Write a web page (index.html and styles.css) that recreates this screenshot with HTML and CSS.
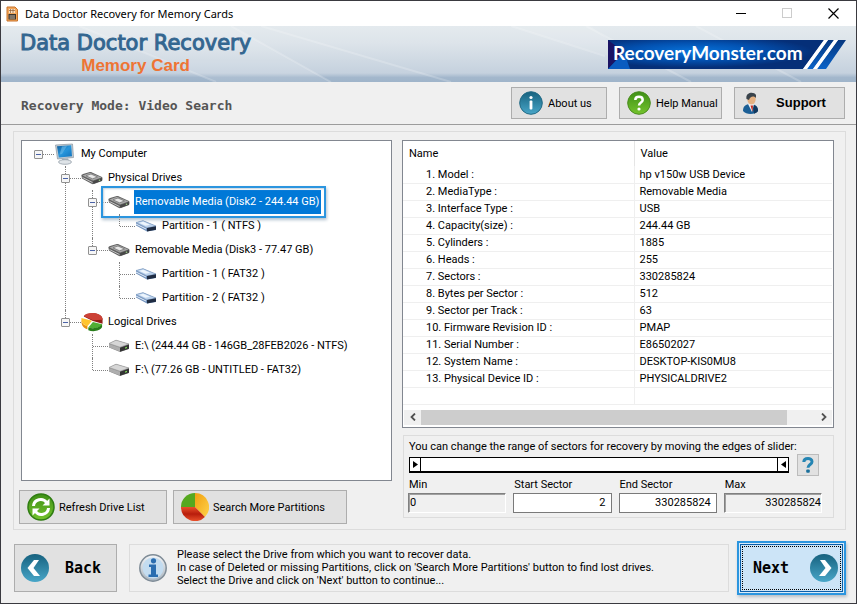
FILE: index.html
```html
<!DOCTYPE html>
<html lang="en">
<head>
<meta charset="utf-8">
<title>Data Doctor Recovery for Memory Cards</title>
<link rel="stylesheet" href="styles.css">
</head>
<body>
<svg class="defs" width="0" height="0" aria-hidden="true">
  <defs>
    <linearGradient id="teal" x1="0" y1="0" x2="0" y2="1"><stop offset="0" stop-color="#17627f"/><stop offset="1" stop-color="#48a6c8"/></linearGradient>
    <linearGradient id="green" x1="0" y1="0" x2="0" y2="1"><stop offset="0" stop-color="#3f9017"/><stop offset="1" stop-color="#74c32c"/></linearGradient>
    <linearGradient id="steel" x1="0" y1="0" x2="0" y2="1"><stop offset="0" stop-color="#f4f6f8"/><stop offset="1" stop-color="#a9b4be"/></linearGradient>
    <linearGradient id="screen" x1="0" y1="0" x2="1" y2="1"><stop offset="0" stop-color="#0f5c9c"/><stop offset="0.5" stop-color="#2796dc"/><stop offset="1" stop-color="#1372bb"/></linearGradient>
    <symbol id="disk" viewBox="0 0 22 14">
      <path d="M.5 5 C0 4 1 3.500 2 3 L8 1.300 C9 1 10 1 11 1.500 L21 6 C21.800 6.500 21.500 9.500 21 10 L13 13 C12 13.300 11 13.200 10 12.500 L1 7.500Z" fill="#636363"/>
      <path d="M1.500 4.500 L9 1.800 L20.500 6.500 L12 9.500Z" fill="#a9a9a9"/>
      <path d="M5 4.800 L10 3 L16.500 6 L11.500 7.800Z" fill="#e9e9e9" stroke="#6c6c6c" stroke-width=".7"/>
      <path d="M12 10.300 L21 7 V9.700 L12.500 12.700Z" fill="#474747"/>
      <path d="M1.500 6.500 L11.500 11.500" stroke="#c9c9c9" stroke-width=".9"/>
      <circle cx="18.500" cy="9.300" r=".8" fill="#9dcf8a"/>
    </symbol>
    <symbol id="part" viewBox="0 0 22 14">
      <path d="M1 3.500 L8 1.500 L21 7 V11 L12 12.500 L1 6.500Z" fill="#7192bd"/>
      <path d="M1 3.500 L8 1.700 L21 7 L12 9Z" fill="#bcd2ec" stroke="#7c99bd" stroke-width=".6"/>
      <path d="M4 3.800 L8.500 2.800 L15 5.800 L10.500 6.800Z" fill="#edf5fd"/>
      <path d="M12 9 L21 7.200 V10.800 L12 12.500Z" fill="#1f2c42"/>
      <path d="M1 5 L11 10" stroke="#e6f0fb" stroke-width="1"/>
    </symbol>
    <symbol id="volume" viewBox="0 0 22 14">
      <path d="M1 4.500 L8 1 L21 5 V10 L12 13 L1 8.500Z" fill="#8a8a8a"/>
      <path d="M1 4.500 L8 1.200 L21 5 L12 8.200Z" fill="#d6d6d6" stroke="#999" stroke-width=".6"/>
      <path d="M1 5 L12 8.700 V12.600 L1 8.200Z" fill="#aeaeae"/>
      <path d="M12 8.700 L21 5.500 V9.800 L12 12.800Z" fill="#333"/>
      <path d="M17 8.500 l2 -.7 v1.200 l-2 .7z" fill="#7ed957"/>
    </symbol>
    <symbol id="computer" viewBox="0 0 22 22">
      <path d="M1.500 2 L18.500 1 L19.500 14.500 L3.500 16Z" fill="#c3ccd3" stroke="#8995a0" stroke-width=".7"/>
      <path d="M3 3.200 L17.200 2.300 L18 13.200 L4.800 14.500Z" fill="url(#screen)"/>
      <path d="M8 3.500 L13 3 L8 11 L5.500 11.500Z" fill="#7cc6f0" opacity=".5"/>
      <path d="M8 15.800 L14 15.200 L15 18 H8Z" fill="#aeb8c0"/>
      <ellipse cx="11" cy="19" rx="6.500" ry="2.300" fill="#dfe4e8" stroke="#8d98a2" stroke-width=".7"/>
    </symbol>
    <symbol id="pie3d" viewBox="0 0 24 22">
      <path d="M3 5 C6 0 22 0 23.500 7.500 V13 L13 10Z" fill="#8f1d16"/>
      <path d="M3 4.500 C6 -.5 22 -.5 23.500 7.500 V8.500 L13 9Z" fill="#cc4136"/>
      <path d="M.5 6.500 L12 9.500 L7 15.500 C2 14 0 10 .5 6.500Z" fill="#ffc52e"/>
      <path d="M.5 8 C1 12.500 3 14.500 7 15.500 V19 C2.500 17.500 .5 14 .5 11Z" fill="#e8930f"/>
      <path d="M13 11 L23 13.500 C23 17 14 19 8 17Z" fill="#4fae34"/>
      <path d="M8 17 C14 19 21 17 23 13.500 V16.500 C21 21 13 22 8 20Z" fill="#287d1a"/>
    </symbol>
  </defs>
</svg>

<header class="titlebar">
  <svg class="app-icon" viewBox="0 0 12 16" aria-hidden="true">
    <path d="M1 1 H9 L11.500 3.500 V15 H1Z" fill="#f2a65a" stroke="#c7722a" stroke-width="1"/>
    <rect x="3" y="3" width="6" height="4" fill="#f8dfc4"/><path d="M3 4.500 H9 M4.500 3 V7 M7 3 V7" stroke="#8c5a32" stroke-width=".7"/>
    <rect x="2.500" y="8" width="7.500" height="5.500" fill="#3b332c"/><path d="M3.500 10 H9 M3.500 12 H9" stroke="#e9dccb" stroke-width=".8"/>
  </svg>
  <span class="window-title">Data Doctor Recovery for Memory Cards</span>
  <button class="win-btn" aria-label="Minimize"><svg viewBox="0 0 11 11"><path d="M0 5.500 H10" stroke="#000"/></svg></button>
  <button class="win-btn" aria-label="Maximize" disabled><svg viewBox="0 0 11 11"><rect x=".5" y=".5" width="9" height="9" fill="none" stroke="#ccc"/></svg></button>
  <button class="win-btn" aria-label="Close"><svg viewBox="0 0 11 11"><path d="M.5 .5 L10.500 10.500 M10.500 .5 L.5 10.500" stroke="#000" stroke-width="1.200"/></svg></button>
</header>

<section class="banner">
  <svg class="rays" viewBox="0 0 855 56" preserveAspectRatio="none" aria-hidden="true">
    <path d="M78 0 L215 56 M230 0 L330 56 M260 0 L450 56 M510 0 L604 30 M585 0 L690 56 M695 0 L800 56" stroke="#fff" stroke-opacity=".2" stroke-width="2" fill="none"/>
    <path d="M78 0 L215 56 H330 L230 0Z M510 0 L640 40 L590 0Z" fill="#fff" fill-opacity=".1"/>
  </svg>
  <div class="brand">
    <h1>Data Doctor Recovery</h1>
    <p>Memory Card</p>
  </div>
  <a class="site" href="#">
    <svg class="site-bg" viewBox="0 0 238 29" preserveAspectRatio="none" aria-hidden="true">
      <defs><radialGradient id="siteblue" cx=".4" cy=".4" r=".55"><stop offset="0" stop-color="#0874dc"/><stop offset=".55" stop-color="#0351b0"/><stop offset="1" stop-color="#052f78"/></radialGradient>
      <linearGradient id="stripe" x1="0" y1="0" x2="0" y2="1"><stop offset="0" stop-color="#06377f"/><stop offset="1" stop-color="#0a63c9"/></linearGradient></defs>
      <path d="M0 0 H216 L195 29 H0Z" fill="url(#siteblue)"/>
      <path d="M0 0 L16 12 L0 29Z" fill="#1b1464"/><path d="M0 29 L16 12 L22 29Z" fill="#0a5cc0"/>
      <path d="M220 0 H226 L205 29 H199Z M230 0 H238 L218 29 H209Z" fill="url(#stripe)"/>
      <path d="M216 0 H220 L199 29 H195Z M226 0 H230 L209 29 H205Z" fill="#fff"/>
    </svg>
    <span>RecoveryMonster.com</span>
  </a>
</section>

<nav class="toolbar">
  <h2>Recovery Mode: Video Search</h2>
  <button class="btn about">
    <svg class="ico24" viewBox="0 0 24 24" aria-hidden="true"><circle cx="12" cy="12" r="11.300" fill="url(#teal)" stroke="#236a85"/><circle cx="12" cy="6.500" r="1.600" fill="#fff"/><rect x="10.600" y="9.500" width="2.800" height="9" rx="1" fill="#fff"/></svg>
    <span>About us</span>
  </button>
  <button class="btn help">
    <svg class="ico24" viewBox="0 0 24 24" aria-hidden="true"><circle cx="12" cy="12" r="11.300" fill="url(#green)" stroke="#4b8c20"/><path d="M8.300 9 C8.300 4.800 15.700 4.800 15.700 9 C15.700 11.500 12 11.500 12 14.500" fill="none" stroke="#fff" stroke-width="2.500"/><circle cx="12" cy="18" r="1.600" fill="#fff"/></svg>
    <span>Help Manual</span>
  </button>
  <button class="btn support">
    <svg viewBox="0 0 18 23" width="18" height="23" aria-hidden="true"><path d="M1 19 C1 14 4 12 8 12 C13 12 16 14 16 19 C13 23 4 23 1 19Z" fill="#1b5f96"/><path d="M11 13 C14 13.500 16 15 16 19 C15 20.500 13.500 21.300 12 21.700Z" fill="#12395f"/><path d="M6 12 L10 20 L12 12Z" fill="#f1f4f7"/><path d="M8.500 13.500 L10.500 20 L11 13.500Z" fill="#c42b20"/><ellipse cx="9.500" cy="7" rx="4.200" ry="5.500" fill="#e6b283"/><path d="M4.500 7 C3 0 12 -1 14 3 L14 6 C11 3 8 5 7 8Z" fill="#39434b"/></svg>
    <span>Support</span>
  </button>
</nav>

<main class="panel">
  <section class="drives">
    <ul class="tree" role="tree">
      <li><div class="row"><button class="toggle" aria-label="Collapse"></button><i class="dots"></i><svg class="node-icon big"><use href="#computer"/></svg><span class="label">My Computer</span></div>
        <ul>
          <li><div class="row"><button class="toggle" aria-label="Collapse"></button><i class="dots"></i><svg class="node-icon"><use href="#disk"/></svg><span class="label">Physical Drives</span></div>
            <ul>
              <li><div class="row"><button class="toggle" aria-label="Collapse"></button><i class="dots"></i><svg class="node-icon"><use href="#disk"/></svg><span class="label selected">Removable Media (Disk2 - 244.44 GB)</span></div>
                <ul>
                  <li><div class="row leaf"><i class="dots"></i><svg class="node-icon"><use href="#part"/></svg><span class="label">Partition - 1 ( NTFS )</span></div></li>
                </ul>
              </li>
              <li><div class="row"><button class="toggle" aria-label="Collapse"></button><i class="dots"></i><svg class="node-icon"><use href="#disk"/></svg><span class="label">Removable Media (Disk3 - 77.47 GB)</span></div>
                <ul>
                  <li><div class="row leaf"><i class="dots"></i><svg class="node-icon"><use href="#part"/></svg><span class="label">Partition - 1 ( FAT32 )</span></div></li>
                  <li><div class="row leaf"><i class="dots"></i><svg class="node-icon"><use href="#part"/></svg><span class="label">Partition - 2 ( FAT32 )</span></div></li>
                </ul>
              </li>
            </ul>
          </li>
          <li><div class="row"><button class="toggle" aria-label="Collapse"></button><i class="dots"></i><svg class="node-icon big"><use href="#pie3d"/></svg><span class="label">Logical Drives</span></div>
            <ul>
              <li><div class="row leaf"><i class="dots"></i><svg class="node-icon"><use href="#volume"/></svg><span class="label">E:\ (244.44 GB - 146GB_28FEB2026 - NTFS)</span></div></li>
              <li><div class="row leaf"><i class="dots"></i><svg class="node-icon"><use href="#volume"/></svg><span class="label">F:\ (77.26 GB - UNTITLED - FAT32)</span></div></li>
            </ul>
          </li>
        </ul>
      </li>
    </ul>
    <div class="actions">
      <button class="btn refresh">
        <svg class="ico28" viewBox="0 0 28 28" aria-hidden="true"><circle cx="14" cy="14" r="13" fill="url(#green)" stroke="#2f7d12" stroke-width="1.500"/><path d="M6.500 13 C7 6 16 4.500 19.500 9.500 M21.500 15 C21 22 12 23.500 8.500 18.500" fill="none" stroke="#fff" stroke-width="3"/><path d="M22.500 5.500 V12.500 H15.500Z M5.500 22.500 V15.500 H12.500Z" fill="#fff"/></svg>
        <span>Refresh Drive List</span>
      </button>
      <button class="btn search">
        <svg class="ico28" viewBox="0 0 28 28" aria-hidden="true">
          <defs><linearGradient id="pr" x1="0" y1="0" x2="0" y2="1"><stop offset="0" stop-color="#e8502a"/><stop offset=".5" stop-color="#b81d0c"/><stop offset="1" stop-color="#e8502a"/></linearGradient><linearGradient id="py" x1="0" y1="0" x2="1" y2="1"><stop offset="0" stop-color="#f0a010"/><stop offset="1" stop-color="#ffd24a"/></linearGradient></defs>
          <path d="M14 14 V0 A14 14 0 0 1 23.900 23.900Z" fill="url(#py)"/><path d="M14 14 L23.900 23.900 A14 14 0 0 1 0 14Z" fill="url(#pr)"/><path d="M14 14 H0 A14 14 0 0 1 14 0Z" fill="#55a81f"/></svg>
        <span>Search More Partitions</span>
      </button>
    </div>
  </section>

  <section class="details">
    <div class="listview">
      <table>
        <thead><tr><th class="name">Name</th><th>Value</th></tr></thead>
        <tbody>
          <tr><td>1. Model :</td><td>hp v150w USB Device</td></tr>
          <tr><td>2. MediaType :</td><td>Removable Media</td></tr>
          <tr><td>3. Interface Type :</td><td>USB</td></tr>
          <tr><td>4. Capacity(size) :</td><td>244.44 GB</td></tr>
          <tr><td>5. Cylinders :</td><td>1885</td></tr>
          <tr><td>6. Heads :</td><td>255</td></tr>
          <tr><td>7. Sectors :</td><td>330285824</td></tr>
          <tr><td>8. Bytes per Sector :</td><td>512</td></tr>
          <tr><td>9. Sector per Track :</td><td>63</td></tr>
          <tr><td>10. Firmware Revision ID :</td><td>PMAP</td></tr>
          <tr><td>11. Serial Number :</td><td>E86502027</td></tr>
          <tr><td>12. System Name :</td><td>DESKTOP-KIS0MU8</td></tr>
          <tr><td>13. Physical Device ID :</td><td>PHYSICALDRIVE2</td></tr>
          <tr><td></td><td></td></tr>
        </tbody>
      </table>
      <div class="scrollbar">
        <button aria-label="Scroll left"><svg viewBox="0 0 6 8"><path d="M5 .5 L1.500 4 L5 7.500" fill="none" stroke="#505050" stroke-width="1.800"/></svg></button>
        <div class="track"><div class="thumb"></div></div>
        <button aria-label="Scroll right"><svg viewBox="0 0 6 8"><path d="M1 .5 L4.500 4 L1 7.500" fill="none" stroke="#505050" stroke-width="1.800"/></svg></button>
      </div>
    </div>

    <div class="range">
      <p>You can change the range of sectors for recovery by moving the edges of slider:</p>
      <div class="slider-row">
        <div class="slider">
          <input class="from" type="range" min="0" max="330285824" value="0" aria-label="Start sector">
          <input class="to" type="range" min="0" max="330285824" value="330285824" aria-label="End sector">
        </div>
        <button class="hint" aria-label="Help"><svg viewBox="0 0 12 16" aria-hidden="true"><path d="M1.800 5 C2 .5 10 .5 10 4.700 C10 7.500 6 7.500 6 10.800" fill="none" stroke="#2585b3" stroke-width="3"/><rect x="4.200" y="12.500" width="3.600" height="3.300" rx="1" fill="#1b6f9b"/></svg></button>
      </div>
      <div class="fields">
        <label for="min">Min</label><label for="start">Start Sector</label><label for="end">End Sector</label><label for="max">Max</label>
        <input id="min" class="sunken first" value="0" readonly>
        <input id="start" value="2">
        <input id="end" value="330285824">
        <input id="max" class="sunken" value="330285824" readonly>
      </div>
    </div>
  </section>
</main>

<footer class="footer">
  <button class="btn back">
    <svg class="ico28" viewBox="0 0 28 28" aria-hidden="true"><circle cx="14" cy="14" r="14" fill="url(#teal)"/><path d="M18 6 H13 L6.500 14 L13 22 H19 L12.500 14Z" fill="#fff"/></svg>
    <span>Back</span>
  </button>
  <div class="info">
    <svg class="ico28" viewBox="0 0 28 28" aria-hidden="true"><circle cx="14" cy="14" r="13.200" fill="url(#steel)" stroke="#7f8c97" stroke-width="1.500"/><circle cx="14" cy="14" r="10.500" fill="#c3dcf0"/><circle cx="14.500" cy="6.800" r="2.600" fill="#2a6db0"/><path d="M10 10.500 H17 V20.500 H19 V23 H9.500 V20.500 H12 V13 H10Z" fill="#2a6db0"/></svg>
    <p>Please select the Drive from which you want to recover data.<br>In case of Deleted or missing Partitions, click on 'Search More Partitions' button to find lost drives.<br>Select the Drive and click on 'Next' button to continue...</p>
  </div>
  <button class="next">
    <span class="next-face">
      <span>Next</span>
      <svg class="ico28" viewBox="0 0 28 28" aria-hidden="true"><circle cx="14" cy="14" r="14" fill="url(#teal)"/><path d="M10 6 H15 L21.500 14 L15 22 H9 L15.500 14Z" fill="#fff"/></svg>
    </span>
  </button>
</footer>
</body>
</html>
```
FILE: styles.css
```css
* { box-sizing: border-box; }

body {
  margin: 0;
  min-height: 100vh;
  display: flex;
  flex-direction: column;
  border: 1px solid #3a3a40;
  background: #f0f0f0;
  color: #000;
  font: 11px/13px Roboto, "DejaVu Sans Condensed", sans-serif;
}

h1, h2, p, ul { margin: 0; padding: 0; }
ul { list-style: none; }
button, input { font: inherit; color: inherit; margin: 0; }
button { padding: 0; }
svg { display: block; flex: none; }
.defs { position: absolute; }

/* Window caption */
.titlebar {
  display: flex;
  align-items: center;
  height: 25px;
  padding: 0 0 0 5px;
  background: #fff;
}
.app-icon { width: 12px; height: 16px; }
.window-title {
  flex: 1;
  margin-left: 7px;
  font: 11px/16px "Noto Sans", "Open Sans", sans-serif;
}
.win-btn {
  display: flex;
  align-items: center;
  justify-content: center;
  width: 46px;
  height: 25px;
  border: 0;
  background: none;
}
.win-btn svg { width: 11px; height: 11px; }

/* Banner */
.banner {
  position: relative;
  display: flex;
  justify-content: space-between;
  height: 56px;
  padding: 3px 10px 0 19px;
  background: linear-gradient(#e4eaee, #dde4ea 30%, #cbd6e1 70%, #c5d1de 84%, #a3b7cc 92%, #9fb4ca);
}
.rays { position: absolute; inset: 0; width: 100%; height: 100%; }
.brand { position: relative; }
.brand h1 {
  color: #336690;
  font: 21px/28px "DejaVu Sans", sans-serif;
  -webkit-text-stroke: 1px #336690;
}
.brand p {
  color: #ee7434;
  text-align: center;
  font: bold 17px/18px "Liberation Sans", sans-serif;
}
.site {
  position: relative;
  width: 238px;
  height: 29px;
  margin-top: 11px;
  padding-left: 5px;
  color: #fff;
  text-decoration: none;
  font: bold 19px/26px Lato, sans-serif;
}
.site-bg { position: absolute; inset: 0; width: 100%; height: 100%; }
.site span { position: relative; }

/* Toolbar */
.toolbar {
  display: flex;
  align-items: center;
  gap: 12px;
  height: 43px;
  padding: 0 11px 0 20px;
  border-bottom: 1px solid #9c9c9c;
}
.toolbar h2 {
  flex: 1;
  padding-top: 6px;
  color: #555;
  font: bold 13px/16px "DejaVu Sans Mono", monospace;
}
.btn {
  display: flex;
  align-items: center;
  gap: 6px;
  height: 34px;
  padding: 0 7px;
  border: 1px solid #adadad;
  background: #e1e1e1;
  white-space: nowrap;
}
.toolbar .btn { height: 32px; gap: 5px; }
.about { width: 96px; }
.help { width: 103px; }
.support { width: 111px; }
.support span { flex: 1; font: bold 13px/16px "Liberation Sans", sans-serif; }
.ico24 { width: 24px; height: 24px; }
.ico28 { width: 28px; height: 28px; }

/* Main panel */
.panel {
  flex: 1;
  display: grid;
  grid-template-columns: 371fr 432fr;
  gap: 10px;
  margin: 6px 10px 0 12px;
  padding: 8px 11px 5px 7px;
  border: 1px solid #dcdcdc;
}
.drives, .details { display: flex; flex-direction: column; min-width: 0; }
.tree {
  flex: 1;
  padding: 1px 0 0 12px;
  border: 1px solid #828790;
  background: #fff;
}
.tree ul { padding-left: 27px; }
.tree li { position: relative; }
.tree li li::before {
  content: "";
  position: absolute;
  left: 4px;
  top: 0;
  bottom: 0;
  border-left: 1px dotted #808080;
}
.tree li li:last-child::before { bottom: auto; height: 12px; }
.row {
  position: relative;
  display: flex;
  align-items: center;
  height: 24px;
  white-space: nowrap;
}
.toggle {
  width: 9px;
  height: 9px;
  border: 1px solid #919191;
  border-radius: 1px;
  background: linear-gradient(#4b63a7, #4b63a7) center / 5px 1px no-repeat, #f6f6f6;
}
.dots { width: 11px; border-top: 1px dotted #808080; }
.leaf .dots { width: 15px; margin-left: 5px; }
.node-icon { width: 22px; height: 14px; }
.node-icon.big { height: 22px; }
.label { margin-left: 4px; padding: 0 1px; line-height: 24px; }
.selected {
  position: relative;
  padding-right: 2px;
  background: #0078d7;
  color: #fff;
}
.selected::after {
  content: "";
  position: absolute;
  inset: -4px -5px -4px -33px;
  border: 2px solid #2b95df;
  box-shadow: 1px 2px 3px #b4c3cf, inset 1px 1px 2px #c6d2dc;
}

.actions { display: flex; gap: 6px; margin: 9px 0 0 -2px; }
.refresh { width: 148px; }
.search { width: 174px; }
.actions .btn { gap: 4px; }

/* Property list */
.listview { border: 1px solid #828790; background: #fff; padding: 0 1px 2px 0; }
.listview table { width: 100%; table-layout: fixed; border-collapse: collapse; }
.listview th {
  height: 25px;
  padding: 0 5px 0 6px;
  font-weight: normal;
  text-align: left;
}
.listview .name { width: 231px; border-right: 1px solid #e5e5e5; }
.listview td { height: 17px; padding: 0 5px; border-bottom: 1px solid #efefef; }
.listview td:first-child { padding-left: 23px; border-right: 1px solid #efefef; }
.scrollbar { display: flex; height: 15px; margin: 5px 0 0 1px; background: #f0f0f0; }
.scrollbar button {
  display: flex;
  align-items: center;
  justify-content: center;
  width: 17px;
  border: 0;
  background: none;
}
.scrollbar svg { width: 6px; height: 8px; }
.track { flex: 1; }
.thumb { width: 93%; height: 100%; background: #cdcdcd; }

/* Sector range */
.range {
  margin: 7px 0 0 1px;
  padding: 4px 11px 4px 4px;
  border: 1px solid #dcdcdc;
}
.range p, .fields label { padding-left: 1px; }
.slider-row { display: flex; align-items: center; gap: 8px; margin-top: 1px; padding-left: 1px; }
.slider {
  flex: 1;
  display: grid;
  height: 16px;
  border: 1px solid #000;
  border-bottom-width: 2px;
  background: #fff;
}
.slider input {
  grid-area: 1 / 1;
  appearance: none;
  width: 100%;
  height: 13px;
  background: none;
  pointer-events: none;
}
.slider input::-webkit-slider-thumb {
  appearance: none;
  width: 11px;
  height: 13px;
  border-right: 1px solid #000;
  pointer-events: auto;
  background: center / 5px 7px no-repeat url("data:image/svg+xml,%3Csvg xmlns='http://www.w3.org/2000/svg' viewBox='0 0 5 7'%3E%3Cpath d='M0 0L5 3.500L0 7Z'/%3E%3C/svg%3E");
}
.slider .to::-webkit-slider-thumb {
  border-right: 0;
  border-left: 1px solid #000;
  background-image: url("data:image/svg+xml,%3Csvg xmlns='http://www.w3.org/2000/svg' viewBox='0 0 5 7'%3E%3Cpath d='M5 0L0 3.500L5 7Z'/%3E%3C/svg%3E");
}
.hint {
  display: flex;
  align-items: center;
  justify-content: center;
  width: 22px;
  height: 22px;
  margin-right: 3px;
  border: 1px solid #bcbcbc;
  background: #e1e1e1;
}
.hint svg { width: 12px; height: 16px; }
.fields {
  display: grid;
  grid-template-columns: repeat(4, 1fr);
  column-gap: 7px;
  row-gap: 2px;
  margin-top: 2px;
}
.fields input {
  width: 100%;
  min-width: 0;
  height: 20px;
  padding: 0 5px;
  border: 1px solid #7a7a7a;
  border-radius: 0;
  background: #fff;
  text-align: right;
}
.fields .sunken {
  padding: 0;
  border: 1px solid;
  border-color: #808080 #fff #fff #808080;
  box-shadow: inset 1px 1px #a0a0a0;
  background: #f0f0f0;
}
.fields .first { padding-left: 1px; text-align: left; }

/* Footer */
.footer {
  display: flex;
  align-items: center;
  height: 73px;
  padding: 2px 10px 0 13px;
}
.back { width: 103px; height: 48px; padding: 0 6px; gap: 16px; }
.back span, .next-face { font: bold 15px/18px "DejaVu Sans Mono", monospace; }
.info {
  flex: 1;
  display: flex;
  align-items: center;
  gap: 10px;
  height: 48px;
  margin: 0 8px 0 12px;
  padding-left: 9px;
  border: 1px solid #dcdcdc;
}
.next {
  width: 109px;
  height: 54px;
  padding: 1px;
  border: 2px solid #2b95df;
  background: #d9ebf9;
  box-shadow: 1px 2px 3px #b5bec6;
}
.next-face {
  display: flex;
  align-items: center;
  justify-content: space-between;
  height: 100%;
  padding: 0 4px 0 12px;
  border: 1px solid #0b5ea8;
  outline: 1px dotted #000;
  outline-offset: -3px;
  background: #cce4f7;
}
```
